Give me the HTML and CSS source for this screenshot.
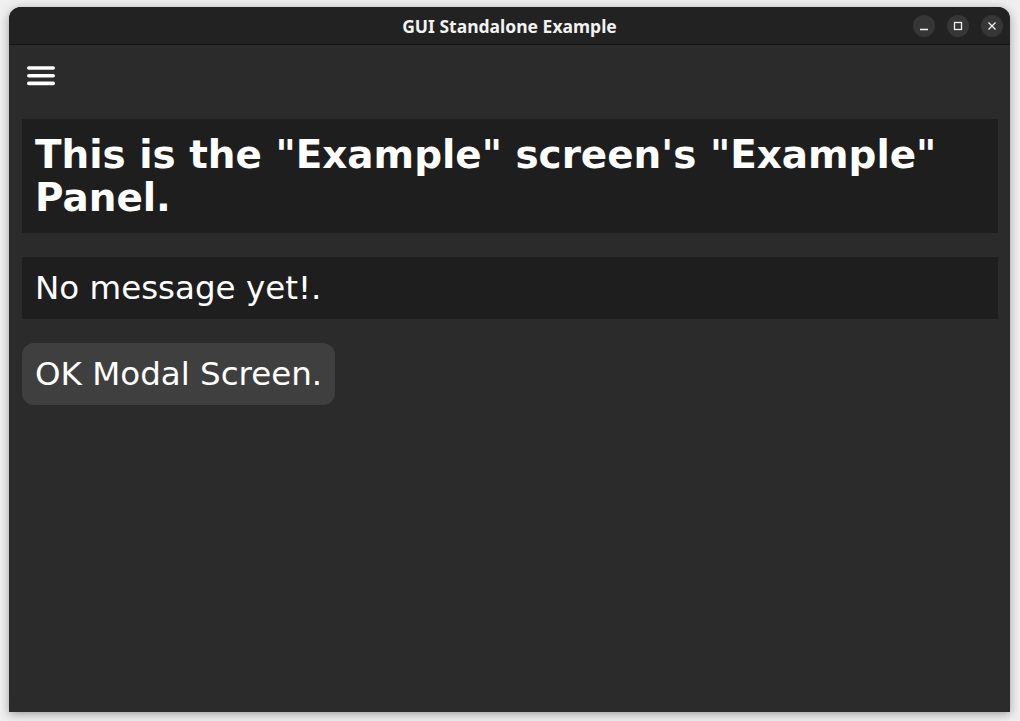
FILE: index.html
```html
<!DOCTYPE html>
<html>
<head>
<meta charset="utf-8">
<link rel="stylesheet" href="styles.css">
</head>
<body>
<div class="window">
  <div class="titlebar">
    <div class="title">GUI Standalone Example</div>
    <div class="controls">
      <div class="ctl"><svg width="22" height="22" viewBox="0 0 22 22"><line x1="7" y1="14.5" x2="15" y2="14.5" stroke="#f2f2f2" stroke-width="1.3"/></svg></div>
      <div class="ctl"><svg width="22" height="22" viewBox="0 0 22 22"><rect x="7.5" y="7.5" width="7" height="7" fill="none" stroke="#f2f2f2" stroke-width="1.3"/></svg></div>
      <div class="ctl"><svg width="22" height="22" viewBox="0 0 22 22"><path d="M7.5 7.5 L14.5 14.5 M14.5 7.5 L7.5 14.5" stroke="#f2f2f2" stroke-width="1.3"/></svg></div>
    </div>
  </div>
  <div class="content">
    <div class="menu">
      <svg width="28" height="20" viewBox="0 0 28 20"><g stroke="#ffffff" stroke-width="3.6" stroke-linecap="round"><line x1="1.8" y1="2" x2="26.2" y2="2"/><line x1="1.8" y1="9.7" x2="26.2" y2="9.7"/><line x1="1.8" y1="17.4" x2="26.2" y2="17.4"/></g></svg>
    </div>
    <div class="panel heading">This is the "Example" screen's "Example" Panel.</div>
    <div class="panel message">No message yet!.</div>
    <div class="row"><div class="button">OK Modal Screen.</div></div>
  </div>
</div>
</body>
</html>
```
FILE: styles.css
```css
html, body {
  margin: 0;
  padding: 0;
  background: #efefef;
  width: 1020px;
  height: 721px;
  overflow: hidden;
}
body {
  padding: 7px 0 0 9px;
  box-sizing: border-box;
}
.window {
  width: 1001px;
  height: 705px;
  background: #2b2b2b;
  border-radius: 12px 12px 0 0;
  box-shadow: 0 2px 10px rgba(0,0,0,0.35);
  overflow: hidden;
  display: flex;
  flex-direction: column;
  font-family: "DejaVu Sans", sans-serif;
  color: #ffffff;
}
.titlebar {
  height: 37px;
  background: #222222;
  border-bottom: 1px solid #151515;
  display: flex;
  align-items: center;
  justify-content: center;
  position: relative;
}
.title {
  font-family: "Noto Sans", "DejaVu Sans", sans-serif;
  font-weight: bold;
  font-size: 17.5px;
  color: #f2f2f2;
}
.controls {
  position: absolute;
  right: 7px;
  top: 8px;
  display: flex;
  gap: 12px;
}
.ctl {
  width: 22px;
  height: 22px;
  border-radius: 50%;
  background: #363636;
}
.ctl svg { display: block; }
.content {
  padding: 0 12px 0 13px;
  display: flex;
  flex-direction: column;
  gap: 24px;
}
.menu {
  margin-top: 21px;
  margin-left: 5px;
  height: 20px;
  margin-bottom: 9px;
}
.menu svg { display: block; }
.panel {
  background: #1e1e1e;
  padding: 14px 13px;
}
.heading {
  font-weight: bold;
  font-size: 38.9px;
  line-height: 43px;
}
.message {
  font-size: 32.5px;
  line-height: 34px;
}
.row {
  display: flex;
}
.button {
  background: #3f3f3f;
  border-radius: 12px;
  padding: 14px 13px;
  font-size: 32.5px;
  line-height: 34px;
}
```
